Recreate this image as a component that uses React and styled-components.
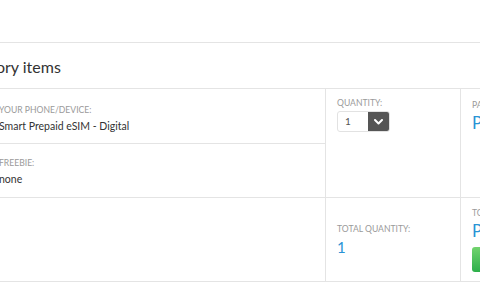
import React from "react";
import styled, { createGlobalStyle } from "styled-components";

const GlobalStyle = createGlobalStyle`
  html, body {
    margin: 0;
    padding: 0;
    background: #fff;
    font-family: Lato, "Open Sans", sans-serif;
    color: #333;
  }
`;

const LINE = "#e4e4e4";
const LABEL = "#9a9a9a";
const BLUE = "#2a93d5";

const Page = styled.div`
  width: 480px;
  height: 300px;
  overflow: hidden;
`;

const TopBar = styled.div`
  height: 42px;
  border-bottom: 1px solid ${LINE};
`;

const Section = styled.div`
  margin-left: -16px;
  width: 640px;
`;

const Heading = styled.h2`
  margin: 0;
  height: 46px;
  display: flex;
  align-items: center;
  padding-top: 2px;
  box-sizing: border-box;
  text-indent: -36px;
  font-size: 16px;
  font-weight: 400;
  color: #333;
  border-bottom: 1px solid ${LINE};
  white-space: nowrap;
  overflow: hidden;
`;

const Table = styled.div`
  display: grid;
  grid-template-columns: 342px 135px 1fr;
  border-bottom: 1px solid ${LINE};
`;

const ItemsCol = styled.div`
  display: flex;
  flex-direction: column;
  border-right: 1px solid ${LINE};
  border-bottom: 1px solid ${LINE};
`;

const ItemCell = styled.div`
  height: 54px;
  box-sizing: border-box;
  padding: ${({ $top }) => $top}px 15px 0;
  & + & {
    border-top: 1px solid ${LINE};
  }
`;

const Cell = styled.div`
  box-sizing: border-box;
  padding: ${({ $top }) => ($top ? `${$top}px` : "0")} 11px 0;
  display: flex;
  flex-direction: column;
  justify-content: ${({ $center }) => ($center ? "center" : "flex-start")};
  border-right: ${({ $last }) => ($last ? "none" : `1px solid ${LINE}`)};
  border-bottom: ${({ $row }) => ($row ? `1px solid ${LINE}` : "none")};
`;

const Blank = styled.div`
  height: 83px;
  border-right: 1px solid ${LINE};
`;

const Label = styled.div`
  font-size: 8.6px;
  line-height: 12px;
  color: ${LABEL};
  text-transform: uppercase;
  white-space: nowrap;
`;

const Value = styled.div`
  font-size: 10.5px;
  line-height: 14px;
  margin-top: 3px;
  color: #333;
  white-space: nowrap;
`;

const BlueValue = styled.div`
  font-size: ${({ $size }) => $size}px;
  line-height: 20px;
  color: ${BLUE};
  margin-top: 2px;
  white-space: nowrap;
`;

const Select = styled.div`
  margin-top: 2px;
  width: 53px;
  height: 21px;
  display: flex;
  box-sizing: border-box;
  border: 1px solid #e2e2e2;
  border-radius: 3px;
  overflow: hidden;
`;

const SelectValue = styled.div`
  flex: 1;
  font-size: 10px;
  line-height: 19px;
  padding-left: 7px;
  color: #555;
`;

const SelectArrow = styled.div`
  width: 21px;
  background: #555;
  display: flex;
  align-items: center;
  justify-content: center;
`;

const CheckoutButton = styled.div`
  margin-top: 6px;
  width: 100px;
  height: 25px;
  border-radius: 3px;
  background: linear-gradient(#72d36e, #2caf4a);
`;

const Chevron = () => (
  <svg width="9" height="6" viewBox="0 0 9 6">
    <path d="M1 1l3.5 3.5L8 1" fill="none" stroke="#fff" strokeWidth="2" strokeLinecap="round" strokeLinejoin="round" />
  </svg>
);

export default function App() {
  return (
    <Page>
      <GlobalStyle />
      <TopBar />
      <Section>
        <Heading>Accessory items</Heading>
        <Table>
          <ItemsCol>
            <ItemCell $top={15}>
              <Label>Your phone/device:</Label>
              <Value>Smart Prepaid eSIM - Digital</Value>
            </ItemCell>
            <ItemCell $top={13}>
              <Label>Freebie:</Label>
              <Value>none</Value>
            </ItemCell>
          </ItemsCol>
          <Cell $top={8} $row>
            <Label>Quantity:</Label>
            <Select>
              <SelectValue>1</SelectValue>
              <SelectArrow>
                <Chevron />
              </SelectArrow>
            </Select>
          </Cell>
          <Cell $top={10} $row $last>
            <Label>Payment:</Label>
            <BlueValue $size={17}>P 0.00</BlueValue>
          </Cell>
          <Blank />
          <Cell $center>
            <Label>Total quantity:</Label>
            <BlueValue $size={15}>1</BlueValue>
          </Cell>
          <Cell $center $last>
            <Label>Total:</Label>
            <BlueValue $size={17}>P 0.00</BlueValue>
            <CheckoutButton />
          </Cell>
        </Table>
      </Section>
    </Page>
  );
}
